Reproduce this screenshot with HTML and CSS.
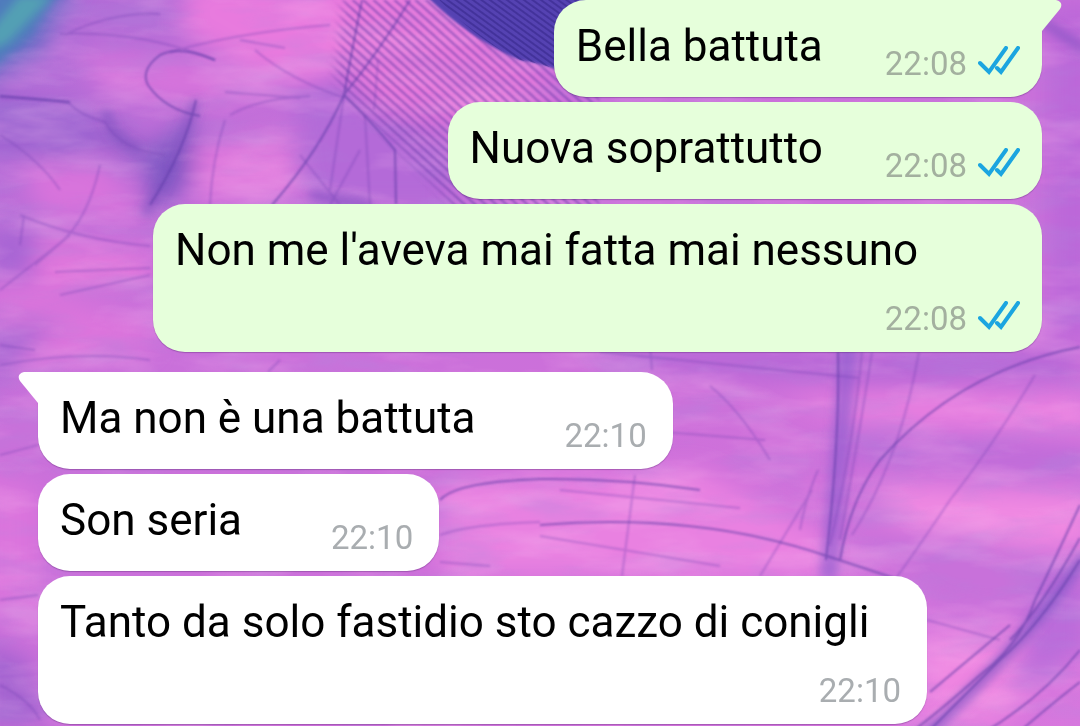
FILE: index.html
```html
<!DOCTYPE html>
<html lang="it">
<head>
  <meta charset="UTF-8">
  <meta name="viewport" content="width=device-width, initial-scale=1">
  <title>Chat</title>
  <link rel="stylesheet" href="styles.css">
</head>
<body>

  <!-- wallpaper -->
  <svg class="wallpaper" viewBox="0 0 1080 726" preserveAspectRatio="xMidYMid slice" aria-hidden="true">
    <defs>
      <linearGradient id="base" x1="0" y1="0" x2="1" y2="1">
        <stop offset="0" stop-color="#ae6bd6"/>
        <stop offset="0.3" stop-color="#c970da"/>
        <stop offset="0.6" stop-color="#cd70da"/>
        <stop offset="1" stop-color="#d877de"/>
      </linearGradient>
      <pattern id="hatch" width="7" height="7" patternUnits="userSpaceOnUse" patternTransform="rotate(42)">
        <path d="M0 2H7" stroke="#6a3cab" stroke-width="2"/>
      </pattern>
      <pattern id="hatchDark" width="5" height="5" patternUnits="userSpaceOnUse" patternTransform="rotate(36)">
        <path d="M0 2H5" stroke="#37288c" stroke-width="2"/>
      </pattern>
      <filter id="soft" x="-50%" y="-50%" width="200%" height="200%"><feGaussianBlur stdDeviation="12"/></filter>
      <filter id="mid" x="-50%" y="-50%" width="200%" height="200%"><feGaussianBlur stdDeviation="5"/></filter>
      <filter id="fine" x="-10%" y="-10%" width="120%" height="120%"><feGaussianBlur stdDeviation="1"/></filter>
      <!-- streaky fibres laid over the colour patches -->
      <filter id="fibreDark" x="0" y="0" width="100%" height="100%">
        <feTurbulence type="fractalNoise" baseFrequency="0.012 0.04" numOctaves="4" seed="8"/>
        <feColorMatrix values="0 0 0 0 0.4  0 0 0 0 0.26  0 0 0 0 0.72  2.6 0 0 0 -1.15"/>
      </filter>
      <filter id="fibreLight" x="0" y="0" width="100%" height="100%">
        <feTurbulence type="fractalNoise" baseFrequency="0.01 0.035" numOctaves="4" seed="21"/>
        <feColorMatrix values="0 0 0 0 0.96  0 0 0 0 0.52  0 0 0 0 0.88  2.6 0 0 0 -1.15"/>
      </filter>
      <mask id="featherMask">
        <path fill="#fff" filter="url(#mid)" d="M345 -20H600V225H470L400 150L335 80Z"/>
      </mask>
    </defs>
    <rect width="1080" height="726" fill="url(#base)"/>

    <g filter="url(#soft)">
      <path fill="#6170c4" d="M-30 -30H80L40 50L-30 90Z"/>
      <path fill="#e87ade" d="M190 -20H420L330 90L250 70L180 30Z"/>
      <path fill="#d673dc" d="M80 50L200 60L290 90L210 110L100 90Z"/>
      <path fill="#9a62d0" d="M-20 90L90 110L110 150L60 165L-20 150Z"/>
      <path fill="#8058c4" d="M105 115L140 150L180 130L190 100L200 170L150 220L145 165L110 145Z"/>
      <path fill="#d873dc" d="M20 160L100 160L150 220L40 215Z"/>
      <path fill="#de76dc" d="M190 150L290 130L300 200L200 200Z"/>
      <path fill="#b46bd8" d="M290 90L340 70L450 160V210H310Z"/>
      <path fill="#e97cdd" d="M350 -20H420L560 90L500 130L380 110L330 60Z"/>
      <path fill="#e276dc" d="M40 240L150 250V285L30 290Z"/>
      <path fill="#dc75dc" d="M-10 280L150 320V350L-10 370Z"/>
      <path fill="#a765d4" d="M-10 220L30 230L40 270L-10 280Z"/>
      <path fill="#a869d4" d="M-10 325L60 320L40 340L-10 390Z"/>
      <path fill="#a362d0" d="M-20 640L30 660L50 726H-20Z"/>
      <path fill="#db75dd" d="M-20 470L40 490V620L-20 600Z"/>
      <path fill="#e981e1" d="M440 480L700 470L830 540L830 576H440Z"/>
      <path fill="#b668d7" d="M600 345L1080 350V380L850 385L650 370Z"/>
      <path fill="#ee82e1" d="M780 395L1090 400V428L860 420Z"/>
      <path fill="#bf6cd9" d="M850 430L1090 445V480L830 465Z"/>
      <path fill="#f089e2" d="M870 485L1090 495V545L1020 548L890 520Z"/>
      <path fill="#c871da" d="M850 530L960 530L1090 570V620L940 610Z"/>
      <path fill="#ee85e1" d="M920 640L1010 630L1060 650L1000 726H920Z"/>
      <path fill="#bc67d9" d="M1045 0H1100V340H1045Z"/>
      <path fill="#bb6cda" d="M1040 580L1090 560V650L1010 690Z"/>
    </g>

    <rect width="1080" height="726" filter="url(#fibreDark)" opacity=".25"/>
    <rect width="1080" height="726" filter="url(#fibreLight)" opacity=".25"/>

    <!-- teal corner and thick shadows -->
    <g filter="url(#mid)">
      <path fill="#4f7cbc" d="M-10 -10H60L30 36L-10 70Z"/>
      <path fill="#53a0b4" d="M-10 32L20 -4H52L8 42L-10 50Z"/>
      <path fill="none" stroke="#7a4fc0" stroke-width="9" opacity=".6" d="M106 110Q110 140 140 150M196 100Q180 150 145 215M1040 20L1085 50M310 195L370 205"/>
      <path fill="none" stroke="#8c5bce" stroke-width="18" opacity=".6" d="M848 345Q840 460 828 580"/>
      <path fill="none" stroke="#8358c8" stroke-width="12" opacity=".7" d="M1085 555Q1020 650 925 735"/>
    </g>

    <!-- feather -->
    <g mask="url(#featherMask)">
      <rect x="320" y="0" width="280" height="225" fill="url(#hatch)" filter="url(#fine)" opacity=".65"/>
    </g>
    <path fill="#5542b2" filter="url(#fine)" d="M420 -10H600V90Q560 66 520 60Q470 40 420 -10Z"/>
    <path fill="url(#hatchDark)" opacity=".6" d="M430 -10H600V90Q560 66 520 60Q475 40 430 -10Z"/>

    <g class="strands" filter="url(#fine)">
      <path d="M65 35Q110 12 160 14M60 34Q140 30 215 60M170 52Q240 32 330 25M240 40L285 48"/>
      <path d="M0 97Q60 100 70 104Q80 115 105 122Q120 150 165 155M0 135Q40 160 60 190M100 165Q88 220 60 243L0 290"/>
      <path d="M225 120Q212 160 210 205M230 115Q260 98 310 96M225 92L300 98M255 50Q290 80 345 98"/>
      <path d="M378 60L374 110M344 95L330 190M365 115L370 205M300 155L340 205M360 150L330 205"/>
      <path d="M20 215Q80 240 150 246M24 215L20 245M0 345L35 350M60 295L150 275M55 272L150 268M35 265L70 235"/>
      <path d="M0 365Q80 350 150 360M0 455L38 445M0 600L38 595M0 685Q30 700 40 720M280 360L268 372"/>
      <path d="M440 535Q470 524 540 522M440 562L490 566M540 536L720 566M635 475L622 576M560 490L740 508M640 430L765 440"/>
      <path d="M600 352L860 378M650 346L652 370M862 352Q854 440 830 545M872 352Q860 430 840 540M919 352Q900 460 852 535"/>
      <path d="M1035 375Q990 450 950 500Q910 560 880 600M760 576L812 490M800 530Q805 500 818 470M927 620L1000 640M710 386Q740 410 770 460"/>
    </g>
    <g class="strands strands-strong" filter="url(#fine)">
      <path d="M160 55Q140 70 148 85Q165 110 200 116M160 55Q180 45 215 60M0 96L70 102M196 100Q185 150 150 205"/>
      <path d="M362 0Q350 60 344 95M410 0Q380 50 344 95Q320 150 272 205M344 95Q370 120 395 150L396 204"/>
      <path d="M440 500Q455 482 540 479Q620 478 700 490M540 525Q700 512 830 557L900 580"/>
      <path d="M838 352Q840 440 826 560M1080 347Q960 370 880 460Q850 500 840 560"/>
      <path d="M1080 505Q1045 580 1035 600Q1020 645 980 675Q930 720 900 740M1080 538Q1040 610 1010 640"/>
      <path d="M1080 560Q1040 625 1000 660L925 735M930 692L1010 625M1080 650Q1040 700 980 735M1080 682Q1050 705 1010 740"/>
    </g>
  </svg>

  <main class="chat">
    <section class="group group-out">
      <div class="bubble with-tail">
        <svg class="tail" width="22" height="32" viewBox="0 0 22 32" aria-hidden="true"><path d="M0 0H16Q24 2 20 9L2 31H0Z"/></svg>
        <p class="text">Bella battuta</p>
        <div class="meta">
          <time>22:08</time>
          <svg class="ticks" width="42" height="30" viewBox="0 0 42 30" role="img" aria-label="Letto"><path d="M2 17L11 26L28 2M19 22L23 26L40 2"/></svg>
        </div>
      </div>
      <div class="bubble">
        <p class="text">Nuova soprattutto</p>
        <div class="meta">
          <time>22:08</time>
          <svg class="ticks" width="42" height="30" viewBox="0 0 42 30" role="img" aria-label="Letto"><path d="M2 17L11 26L28 2M19 22L23 26L40 2"/></svg>
        </div>
      </div>
      <div class="bubble">
        <p class="text">Non me l'aveva mai fatta mai nessuno</p>
        <div class="meta">
          <time>22:08</time>
          <svg class="ticks" width="42" height="30" viewBox="0 0 42 30" role="img" aria-label="Letto"><path d="M2 17L11 26L28 2M19 22L23 26L40 2"/></svg>
        </div>
      </div>
    </section>

    <section class="group group-in">
      <div class="bubble with-tail">
        <svg class="tail" width="22" height="32" viewBox="0 0 22 32" aria-hidden="true"><path d="M22 0H6Q-2 2 2 9L20 31H22Z"/></svg>
        <p class="text">Ma non è una battuta</p>
        <div class="meta"><time>22:10</time></div>
      </div>
      <div class="bubble">
        <p class="text">Son seria</p>
        <div class="meta"><time>22:10</time></div>
      </div>
      <div class="bubble">
        <p class="text">Tanto da solo fastidio sto cazzo di conigli</p>
        <div class="meta"><time>22:10</time></div>
      </div>
    </section>
  </main>

</body>
</html>
```
FILE: styles.css
```css
* {
  box-sizing: border-box;
}

body {
  margin: 0;
  min-height: 100vh;
  font-family: Roboto, Arial, sans-serif;
  background-color: #cb70dc;
  color: #000;
}

.wallpaper {
  position: fixed;
  inset: 0;
  width: 100%;
  height: 100%;
}

.strands {
  fill: none;
  stroke: #7442b4;
  stroke-width: 2;
  opacity: 0.35;
}

.strands-strong {
  stroke: #5c3aa6;
  opacity: 0.6;
}

.chat {
  position: relative;
  display: flex;
  flex-direction: column;
  gap: 20px;
  padding: 0 38px 2px;
}

.group {
  display: flex;
  flex-direction: column;
  align-items: flex-start;
  gap: 5px;
}

.group-out {
  align-items: flex-end;
}

.bubble {
  position: relative;
  display: flex;
  flex-wrap: wrap;
  align-items: flex-end;
  column-gap: 89px;
  max-width: 889px;
  padding: 21px 26px 8px 22px;
  border-radius: 32px;
  background-color: #fff;
  box-shadow: 0 1px 1px rgba(60, 20, 90, 0.3);
}

.group-out .bubble {
  column-gap: 62px;
  padding-right: 22px;
  background-color: #e6ffdb;
}

.group-in .with-tail {
  border-top-left-radius: 0;
}

.group-out .with-tail {
  border-top-right-radius: 0;
}

.tail {
  position: absolute;
  top: 0;
  right: 100%;
  margin-right: -2px;
  fill: #fff;
}

.group-out .tail {
  right: auto;
  left: 100%;
  margin: 0 0 0 -2px;
  fill: #e6ffdb;
}

.text {
  margin: 0 0 17px;
  font-size: 44px;
  line-height: 51px;
}

.meta {
  display: flex;
  align-items: center;
  gap: 11px;
  margin-left: auto;
  font-size: 33px;
  line-height: 51px;
  color: #a9adb0;
}

.group-out .meta {
  color: #a3b09f;
}

.ticks {
  margin-bottom: 5px;
  fill: none;
  stroke: #1ba5e0;
  stroke-width: 4;
  stroke-linecap: round;
}
```
